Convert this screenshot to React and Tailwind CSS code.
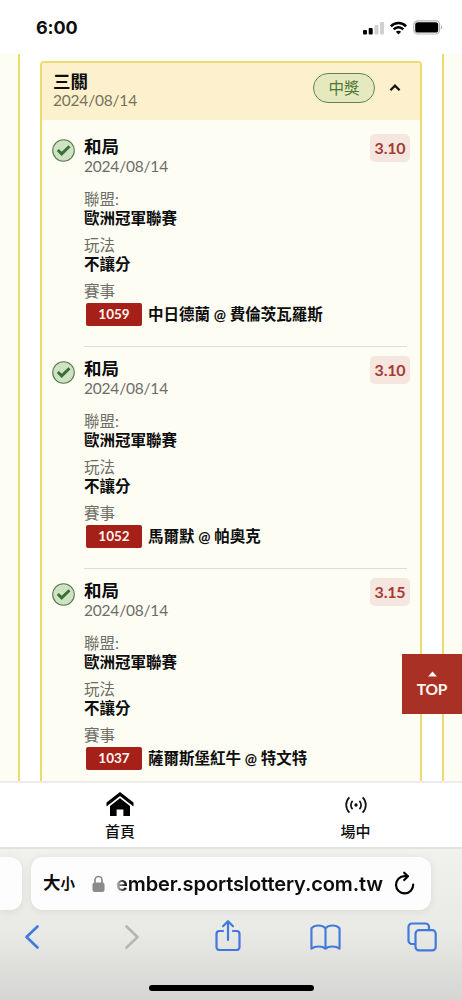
const legs = [
  { pick: '和局', date: '2024/08/14', odds: '3.10', league: '歐洲冠軍聯賽', play: '不讓分', code: '1059', home: '中日德蘭', away: '費倫茨瓦羅斯' },
  { pick: '和局', date: '2024/08/14', odds: '3.10', league: '歐洲冠軍聯賽', play: '不讓分', code: '1052', home: '馬爾默', away: '帕奧克' },
  { pick: '和局', date: '2024/08/14', odds: '3.15', league: '歐洲冠軍聯賽', play: '不讓分', code: '1037', home: '薩爾斯堡紅牛', away: '特文特' },
];

function StatusBar() {
  return (
    <div className="flex h-[54px] shrink-0 items-center justify-between bg-white pl-[36px] pr-[19px] pt-[1px] font-['Inter',sans-serif]">
      <span className="text-[18px] font-bold leading-none tracking-[-0.1px]">6:00</span>
      <div className="flex items-center gap-[6px]">
        <svg width="21" height="14" viewBox="0 0 21 14">
          <rect x="0" y="9" width="4" height="4.5" rx="1" />
          <rect x="5.7" y="7" width="4" height="6.5" rx="1" />
          <rect x="11.4" y="4" width="4" height="9.5" rx="1" fill="#d0d0d0" />
          <rect x="17" y="1" width="4" height="12.5" rx="1" fill="#d0d0d0" />
        </svg>
        <svg width="17" height="14" viewBox="0 0 17 14" fill="none" stroke="#000" strokeWidth="2.5">
          <path d="M.9 5.4C5 .9 12 .9 16.1 5.4" />
          <path d="M3.7 8.3c2.7-2.9 6.9-2.9 9.6 0" />
          <path d="M5.9 10.8c1.5-1.5 3.7-1.5 5.2 0L8.5 13.6z" fill="#000" stroke="none" />
        </svg>
        <svg width="30" height="15" viewBox="0 0 30 15">
          <rect x=".8" y=".8" width="25.8" height="13.2" rx="4" fill="#fff" stroke="#b5b5b5" strokeWidth="1.2" />
          <rect x="2.2" y="2.2" width="23" height="10.4" rx="2.6" />
          <path d="M28 5.3c1.6.8 1.6 3.4 0 4.2z" fill="#a9a9a9" />
        </svg>
      </div>
    </div>
  );
}

function Field({ label, value }) {
  return (
    <div className="mb-2 text-[15.5px] leading-[19px]">
      <p className="text-[#6d6d68]">{label}</p>
      <p className="font-bold">{value}</p>
    </div>
  );
}

function Leg({ leg, last }) {
  return (
    <div className="flex pl-[10px] pr-[10px]">
      <svg className="mt-[1px] shrink-0" width="24" height="24" viewBox="0 0 24 24">
        <circle cx="11.5" cy="12.5" r="10.8" fill="#cfe3c2" stroke="#587c52" strokeWidth="1.1" />
        <path d="M5.8 12l3.9 3.9 7.8-7.7" fill="none" stroke="#3b6f38" strokeWidth="2.9" />
      </svg>
      <div className="ml-[8px] flex-1">
        <div className="flex h-[53px] justify-between">
          <div>
            <p className="text-[17.5px] font-bold leading-[20px]">{leg.pick}</p>
            <p className="text-[15.5px] leading-[18px] tracking-[-0.2px] text-[#6d6d68]">{leg.date}</p>
          </div>
          <span className="-mt-[3px] h-[28px] w-[40px] rounded-[5px] bg-[#f5e6df] text-center text-[16px] font-bold leading-[28px] tracking-[-0.2px] text-[#a83a32]">
            {leg.odds}
          </span>
        </div>
        <Field label="聯盟:" value={leg.league} />
        <Field label="玩法" value={leg.play} />
        <p className="text-[15.5px] leading-[19px] text-[#6d6d68]">賽事</p>
        <div className="mt-[2px] flex h-[23px] items-center pl-[2px]">
          <span className="h-[23px] w-[56px] rounded-[2px] bg-[#a52019] text-center text-[13.5px] font-bold leading-[23px] text-[#fff6ef]">
            {leg.code}
          </span>
          <span className="ml-[6px] whitespace-nowrap text-[15.5px] font-bold leading-[24px]">
            {leg.home} <span className="text-[14.5px]">@</span> {leg.away}
          </span>
        </div>
        <div className={`mb-3 mr-[3px] mt-5 h-px ${last ? '' : 'bg-[#deded8]'}`} />
      </div>
    </div>
  );
}

function Ticket() {
  return (
    <div className="rounded-t-[4px] border-2 border-b-0 border-[#eedb6d] bg-[#fefdf3]">
      <div className="flex h-[57px] items-start justify-between bg-[#fcf1cc] pl-[11px] pr-[19px] pt-[9px]">
        <div>
          <p className="text-[17.5px] font-bold leading-[20px]">三關</p>
          <p className="text-[15.5px] leading-[17px] tracking-[-0.2px] text-[#77715e]">2024/08/14</p>
        </div>
        <div className="mt-[1px] flex items-center gap-[14px]">
          <span className="h-[30px] w-[62px] rounded-full border border-[#5d8447] bg-[#e5e9bd] text-center text-[15.5px] leading-[28px] text-[#4c7837]">
            中獎
          </span>
          <svg width="12" height="10" viewBox="0 0 12 10" fill="none" stroke="#111" strokeWidth="2.2">
            <path d="M1.4 7.2L6 2.6l4.6 4.6" />
          </svg>
        </div>
      </div>
      <div className="pt-[17px]">
        {legs.map((leg, i) => (
          <Leg key={leg.code} leg={leg} last={i === legs.length - 1} />
        ))}
      </div>
    </div>
  );
}

function SiteNav() {
  return (
    <div className="grid h-[66px] shrink-0 grid-cols-2 border-t-2 border-[#ececec] bg-white text-[15px] font-medium leading-[20px]">
      <div className="flex flex-col items-center pl-[9px] pt-[8px]">
        <svg width="28" height="26" viewBox="0 0 28 26">
          <path d="M14 1L27.5 11.5v4L14 5 .5 15.5v-4z" />
          <path d="M14 7.2l10 7.7V25h-6.6v-6.5h-6.8V25H4V14.9z" />
        </svg>
        <span className="mt-[4px]">首頁</span>
      </div>
      <div className="flex flex-col items-center pl-[18px] pt-[10px]">
        <svg width="24" height="24" viewBox="0 0 24 24" fill="none" stroke="#111" strokeWidth="1.7">
          <circle cx="12" cy="12" r="1.7" fill="#111" stroke="none" />
          <path d="M8.6 7.8a6 6 0 0 0 0 8.4M15.4 7.8a6 6 0 0 1 0 8.4M5.4 4.4a10.6 10.6 0 0 0 0 15.2M18.6 4.4a10.6 10.6 0 0 1 0 15.2" />
        </svg>
        <span className="mt-[4px]">場中</span>
      </div>
    </div>
  );
}

function BrowserBar() {
  return (
    <div className="flex h-[153px] shrink-0 flex-col border-t-2 border-[#e2e2e0] bg-linear-to-b from-[#f1f1ed] via-[#e9e9e5] via-55% to-[#d5d5d4]">
      <div className="mt-[8px] flex h-[53px] gap-[9px]">
        <div className="w-[22px] rounded-r-[12px] bg-[#fdfdfd] shadow-[0_1px_8px_rgba(0,0,0,0.08)]" />
        <div className="flex w-[400px] items-center rounded-[12px] bg-[#fdfdfd] pl-[12px] pr-[15px] shadow-[0_1px_8px_rgba(0,0,0,0.08)]">
          <span className="w-[49px] whitespace-nowrap text-[17.5px] font-bold">
            大<span className="text-[14.5px]">小</span>
          </span>
          <svg className="shrink-0" width="13" height="18" viewBox="0 0 13 18">
            <path d="M3 8V5a3.5 3.5 0 0 1 7 0v3" fill="none" stroke="#8b8b8e" strokeWidth="1.7" />
            <rect x=".5" y="7.5" width="12" height="9.5" rx="2" fill="#8b8b8e" />
          </svg>
          <div className="ml-[3px] flex w-[275px] justify-end mask-[linear-gradient(to_right,transparent_5px,black_18px)] font-['Inter',sans-serif] text-[20px] font-semibold tracking-[-0.1px]">
            <span>ember.sportslottery.com.tw</span>
          </div>
          <svg className="ml-auto shrink-0" width="22" height="26" viewBox="0 0 22 26" fill="none" stroke="#000" strokeWidth="2.2" strokeLinecap="round" strokeLinejoin="round">
            <path d="M19.2 13.5a8.6 8.6 0 1 1-8.6-8.3h3" />
            <path d="M10.2 1.7l3.7 3.5-3.7 3.8" />
          </svg>
        </div>
      </div>
      <div className="mt-[9px] flex h-[34px] items-center justify-between pl-[24px] pr-[25px] text-[#4079df]">
        <svg className="mt-[1px]" width="16" height="26" viewBox="0 0 16 26" fill="none" stroke="currentColor" strokeWidth="2.6" strokeLinecap="round" strokeLinejoin="round">
          <path d="M13.5 2.5L2.5 13l11 10.5" />
        </svg>
        <svg className="ml-[18px] mt-[1px]" width="16" height="26" viewBox="0 0 16 26" fill="none" stroke="#b5b5b3" strokeWidth="2.6" strokeLinecap="round" strokeLinejoin="round">
          <path d="M2.5 2.5L13.5 13l-11 10.5" />
        </svg>
        <svg className="ml-[7px]" width="28" height="34" viewBox="0 0 28 34" fill="none" stroke="currentColor" strokeWidth="2.2" strokeLinecap="round" strokeLinejoin="round">
          <path d="M9 12H5.5A3 3 0 0 0 2.5 15v13a3 3 0 0 0 3 3h17a3 3 0 0 0 3-3V15a3 3 0 0 0-3-3H19" />
          <path d="M14 21V2.500M9 7.2l5-5 5 5" />
        </svg>
        <svg className="ml-[2px] mt-[1px]" width="31" height="28" viewBox="0 0 32 28" fill="none" stroke="currentColor" strokeWidth="2.2" strokeLinejoin="round">
          <path d="M16 5C12.5 1.2 5 1.2 1.5 5v21c4-3 11-3 14.5 0 3.5-3 10.5-3 14.500 0V5C27 1.2 19.5 1.2 16 5zM16 5v21" />
        </svg>
        <svg className="mt-[1px]" width="30" height="30" viewBox="0 0 30 30" fill="none" stroke="currentColor" strokeWidth="2.2" strokeLinejoin="round">
          <rect x="8.5" y="8.2" width="20.2" height="20.2" rx="3.5" />
          <path d="M8.5 22H5a3.5 3.5 0 0 1-3.5-3.5V5A3.5 3.5 0 0 1 5 1.5h13.5A3.5 3.5 0 0 1 22 5v3" />
        </svg>
      </div>
      <div className="mx-auto mt-[32px] h-[6px] w-[165px] rounded-full bg-black" />
    </div>
  );
}

export default function App() {
  return (
    <div className="relative flex h-[1000px] w-[462px] flex-col overflow-hidden bg-white font-['Lato','Noto_Sans_CJK_TC',sans-serif] text-[#0d0d0d]">
      <StatusBar />
      <div className="h-[727px] shrink-0 overflow-hidden bg-[#fefdf3] px-[18px]">
        <div className="h-full border-x-2 border-[#eedb6d] bg-white px-[20px] pt-[7px]">
          <Ticket />
        </div>
      </div>
      <SiteNav />
      <BrowserBar />

      <button className="absolute right-0 top-[654px] flex h-[60px] w-[60px] flex-col items-center bg-[#a83025] pt-[17px] text-[15.5px] font-bold leading-[20px] text-[#fff6ef]">
        <svg width="9" height="6" viewBox="0 0 9 6" fill="currentColor">
          <path d="M0 5.5L4.5.5 9 5.5z" />
        </svg>
        <span className="mt-[2px] tracking-[-0.2px]">TOP</span>
      </button>
    </div>
  );
}
